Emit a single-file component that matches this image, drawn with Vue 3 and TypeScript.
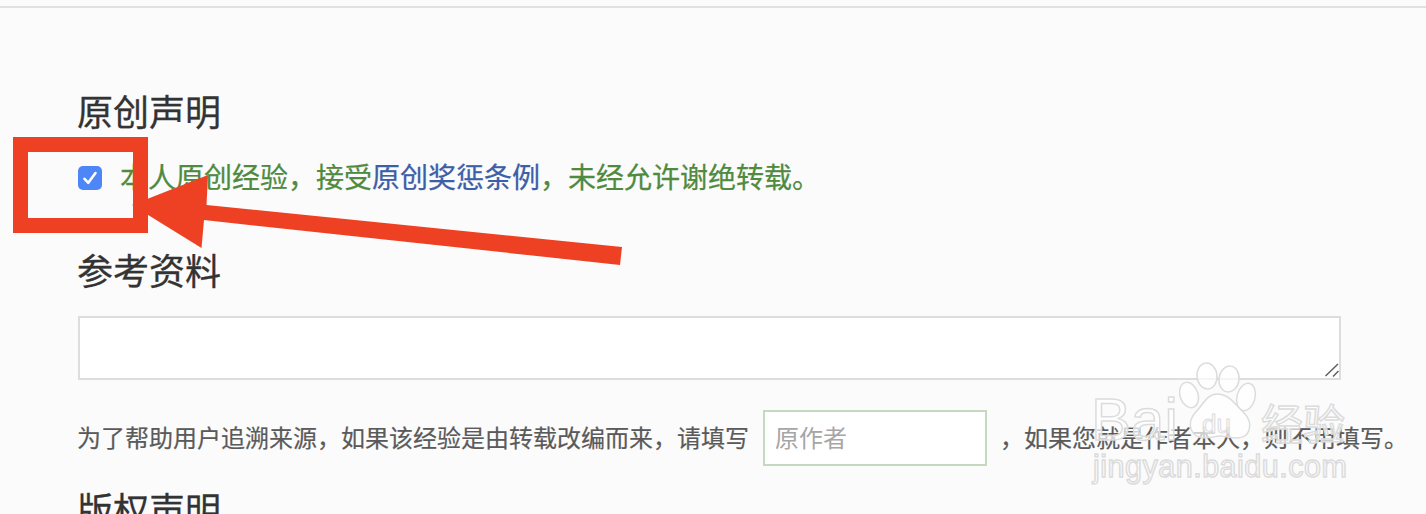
<script setup lang="ts">
const helperBefore: string = '为了帮助用户追溯来源，如果该经验是由转载改编而来，请填写';
const helperAfter: string = '，如果您就是作者本人，则不用填写。';
</script>

<template>
  <main class="page">
    <hr class="top-rule" />
    <section class="content">
      <h2 class="heading">原创声明</h2>
      <div class="declare">
        <span class="check" role="checkbox" aria-checked="true">
          <svg viewBox="0 0 24 24" width="24" height="24">
            <path d="M6.5 12.8l3.8 4L17.5 7" fill="none" stroke="#fff" stroke-width="2.6" stroke-linecap="round" stroke-linejoin="round" />
          </svg>
        </span>
        <span class="declare-text">本人原创经验，接受<a class="link">原创奖惩条例</a>，未经允许谢绝转载。</span>
      </div>
      <h2 class="heading second">参考资料</h2>
      <div class="refs-box">
        <textarea class="refs"></textarea>
        <svg class="grip" viewBox="0 0 14 14" width="14" height="14">
          <path d="M0.5 13L13 1M8 13.500L13.500 8" fill="none" stroke="#5f5f5f" stroke-width="1.500" />
        </svg>
      </div>
      <div class="helper">
        <span class="helper-text">{{ helperBefore }}</span>
        <input class="author" placeholder="原作者" />
        <span class="helper-text">{{ helperAfter }}</span>
      </div>
      <h2 class="heading third">版权声明</h2>
    </section>

    <svg class="arrow" viewBox="0 0 1426 514" width="1426" height="514">
      <path d="M132 205L208 175L206.500 205L622 247L620 265L204 220L201.500 248Z" fill="#ee4023" />
    </svg>
    <div class="red-box"></div>

    <div class="watermark">
      <svg class="paw" viewBox="0 0 80 90" width="80" height="90">
        <g fill="rgba(255,255,255,.7)" stroke="#dcdcdc" stroke-width="1.500">
          <ellipse cx="28" cy="15" rx="10" ry="13" transform="rotate(-5 28 15)" />
          <ellipse cx="50" cy="18" rx="10" ry="13" transform="rotate(8 50 18)" />
          <ellipse cx="10" cy="34" rx="9" ry="13" transform="rotate(-18 10 34)" />
          <ellipse cx="67" cy="36" rx="9" ry="14" transform="rotate(15 67 36)" />
          <path d="M38 33C28 33 24 44 16 52C8 61 10 77 26 77C33 77 36 75 41 75C47 75 51 77 58 77C72 77 74 62 66 53C56 43 50 33 38 33Z" />
        </g>
        <text x="23" y="72" class="du">du</text>
      </svg>
      <span class="wm-bai">Bai</span>
      <span class="wm-cn">经验</span>
      <span class="wm-url">jingyan.baidu.com</span>
    </div>
  </main>
</template>

<style>
html,
body {
  margin: 0;
  overflow: hidden;
}
</style>

<style scoped>
.page {
  position: relative;
  width: 1426px;
  height: 514px;
  overflow: hidden;
  background: #fbfbfb;
  font-family: "Noto Sans CJK SC", "Noto Sans", sans-serif;
}
.top-rule {
  margin: 0;
  border: 0;
  height: 2px;
  background: #e0e0e0;
  position: relative;
  top: 6px;
}
.content {
  display: flex;
  flex-direction: column;
  padding: 83px 0 0 78px;
}
.heading {
  margin: 0 0 0 -1px;
  font-size: 36px;
  font-weight: 400;
  line-height: 50px;
  color: #333;
  -webkit-text-stroke: 0.3px #333;
}
.declare {
  display: flex;
  align-items: center;
  gap: 18px;
  height: 50px;
  margin-top: 18px;
}
.check {
  display: flex;
  width: 24px;
  height: 24px;
  border-radius: 5px;
  background: #4d86f7;
}
.declare-text {
  padding-bottom: 4px;
  font-size: 28px;
  color: #4f8a3f;
  white-space: nowrap;
  -webkit-text-stroke: 0.25px currentColor;
}
.link {
  color: #3b5fa8;
}
.second {
  margin-top: 41px;
}
.refs-box {
  position: relative;
  width: 1263px;
  height: 64px;
  margin-top: 22px;
}
.refs {
  box-sizing: border-box;
  display: block;
  width: 100%;
  height: 100%;
  border: 2px solid #dddddd;
  border-radius: 0;
  background: #fff;
  outline: none;
  resize: none;
}
.grip {
  position: absolute;
  right: 2px;
  bottom: 3px;
}
.helper {
  display: flex;
  align-items: center;
  height: 56px;
  margin: 30px 0 0 -1px;
  font-size: 24px;
  color: #5a5a5a;
  white-space: nowrap;
}
.helper-text {
  padding-bottom: 4px;
  -webkit-text-stroke: 0.2px currentColor;
}
.author {
  box-sizing: border-box;
  width: 224px;
  height: 56px;
  margin: 0 13px 0 14px;
  padding: 0 10px 4px;
  border: 2px solid #c5d9c0;
  border-radius: 0;
  background: #fff;
  outline: none;
  font-family: inherit;
  font-size: 24px;
}
.author::placeholder {
  color: #a6a6a6;
}
.third {
  margin-top: 17px;
}
.arrow {
  position: absolute;
  left: 0;
  top: 0;
}
.red-box {
  position: absolute;
  left: 13px;
  top: 137px;
  width: 135px;
  height: 96px;
  box-sizing: border-box;
  border: 15px solid #ee4023;
}
.watermark {
  position: absolute;
  left: 0;
  top: 0;
  width: 1426px;
  height: 514px;
  pointer-events: none;
  font-family: "Liberation Sans", sans-serif;
}
.paw {
  position: absolute;
  left: 1179px;
  top: 361px;
}
.du {
  font-family: "Liberation Sans", sans-serif;
  font-size: 26px;
  fill: rgba(255, 255, 255, 0.5);
  stroke: #dcdcdc;
  stroke-width: 1px;
}
.wm-bai,
.wm-cn,
.wm-url {
  position: absolute;
  white-space: nowrap;
  color: rgba(255, 255, 255, 0.7);
  -webkit-text-stroke: 1.5px #dcdcdc;
}
.wm-bai {
  left: 1091px;
  top: 390px;
  font-size: 60px;
  line-height: 60px;
}
.wm-cn {
  left: 1261px;
  top: 397px;
  font-family: "Noto Sans CJK SC", sans-serif;
  font-size: 42px;
  line-height: 50px;
}
.wm-url {
  left: 1093px;
  top: 447px;
  font-size: 30.5px;
  line-height: 38px;
  letter-spacing: 0.5px;
}
</style>
